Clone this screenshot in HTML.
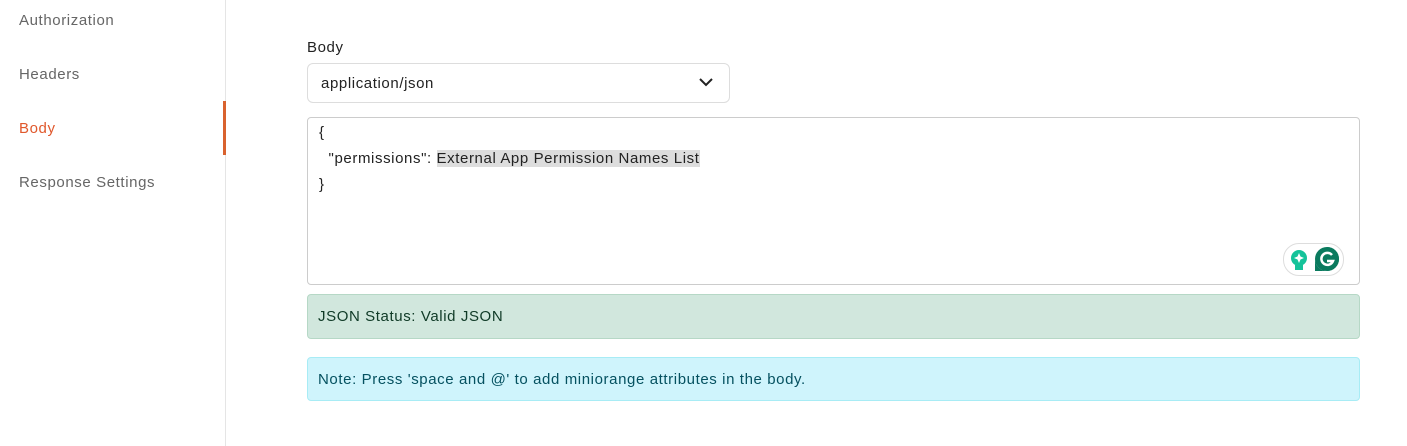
<!DOCTYPE html>
<html><head><style>
body{margin:0;width:1407px;height:446px;background:#fff;font-family:"Liberation Sans",sans-serif;position:relative;overflow:hidden}
.side{position:absolute;left:0;top:0;width:225px;height:446px;border-right:1px solid #e5e5e5}
.nav{position:absolute;left:19px;font-size:15px;color:#666;letter-spacing:0.6px}
.t{position:absolute;font-size:15px;color:#222;letter-spacing:0.6px}
</style></head><body>
<div class="side"></div>
<div class="nav" style="top:12px">Authorization</div>
<div class="nav" style="top:66px">Headers</div>
<div class="nav" style="top:120px;color:#e0582c">Body</div>
<div style="position:absolute;left:223px;top:101px;width:3px;height:54px;background:#d9622e"></div>
<div class="nav" style="top:174px">Response Settings</div>
<div class="t" style="left:307px;top:39px">Body</div>
<div style="position:absolute;left:307px;top:63px;width:421px;height:38px;border:1px solid #ddd;border-radius:6px"></div>
<div class="t" style="left:321px;top:75px">application/json</div>
<svg style="position:absolute;left:699px;top:77px" width="14" height="10"><path d="M1 2l6 6 6-6" fill="none" stroke="#222" stroke-width="2"/></svg>
<div style="position:absolute;left:307px;top:117px;width:1051px;height:166px;border:1px solid #ccc;border-radius:4px"></div>
<div class="t" style="left:319px;top:120px;line-height:26px;white-space:pre">{
  "permissions": <span style="background:#ddd">External App Permission Names List</span>
}</div>
<div style="position:absolute;left:1283px;top:243px;width:59px;height:31px;border:1px solid #ddd;border-radius:16px;background:#fff"></div>
<svg style="position:absolute;left:1289px;top:249px" width="20" height="22"><circle cx="10" cy="9" r="8" fill="#15c39a"/><rect x="6" y="16" width="8" height="5" fill="#15c39a"/><path d="M10 4l1.5 3.5 3.5 1.5-3.5 1.5L10 14l-1.5-3.5L5 9l3.5-1.5z" fill="#fff"/></svg>
<svg style="position:absolute;left:1314px;top:246px" width="26" height="26"><path d="M13 1a12 12 0 1 1-12 12V25h12" fill="#0a7a5e"/><circle cx="13" cy="13" r="12" fill="#0a7a5e"/><path d="M18 9a6 6 0 1 0 1 6h-6" fill="none" stroke="#fff" stroke-width="2.5"/></svg>
<div style="position:absolute;left:307px;top:294px;width:1051px;height:43px;border:1px solid #b6d8c6;border-radius:4px;background:#d1e7dd"></div>
<div class="t" style="left:318px;top:308px;color:#0f3a26">JSON Status: Valid JSON</div>
<div style="position:absolute;left:307px;top:357px;width:1051px;height:42px;border:1px solid #a8ecf5;border-radius:4px;background:#cff4fc"></div>
<div class="t" style="left:318px;top:371px;color:#055160">Note: Press 'space and @' to add miniorange attributes in the body.</div>
</body></html>
